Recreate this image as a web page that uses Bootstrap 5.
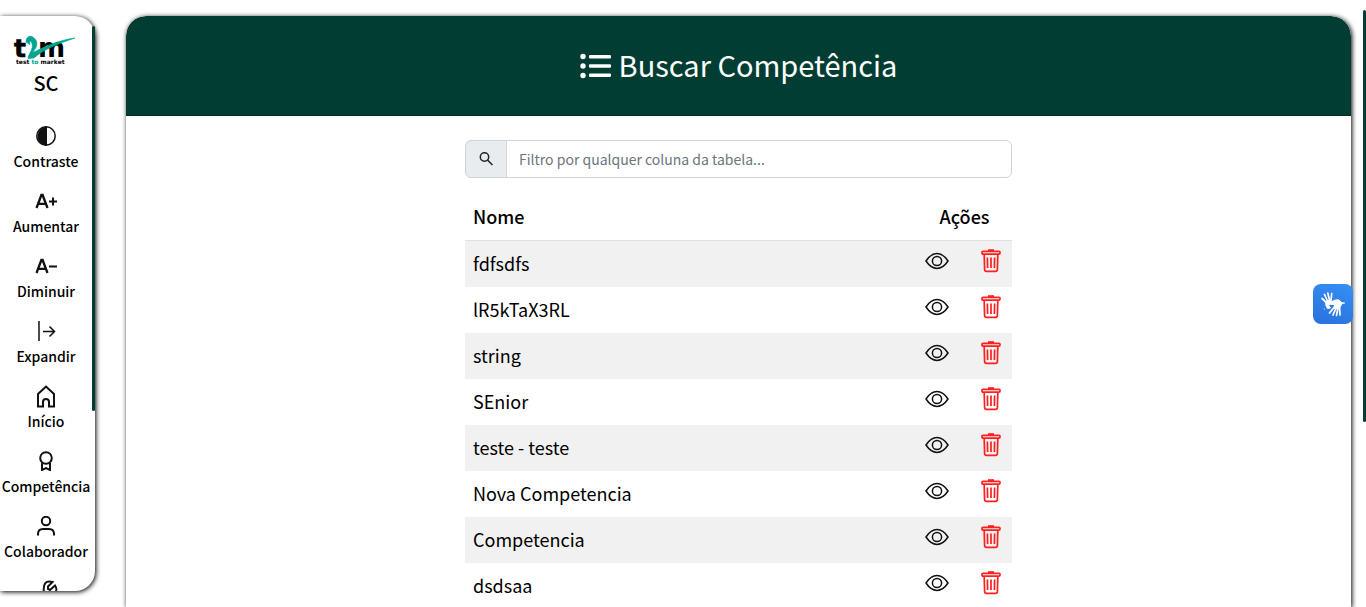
<!DOCTYPE html>
<html lang="pt-BR">
<head>
<meta charset="utf-8">
<meta name="viewport" content="width=device-width, initial-scale=1">
<title>Buscar Competência</title>
<link rel="stylesheet" href="https://cdn.jsdelivr.net/npm/bootstrap@5.3.0/dist/css/bootstrap.min.css">
<style>
  :root { --brand: #023d33; }
  body { font-family: "Noto Sans CJK JP", "Noto Sans", sans-serif; background: #fff; color: #000; }
  .page { height: 100vh; padding-top: 16px; gap: 31px; }
  .sidebar { width: 95px; height: calc(100vh - 32px); border-radius: 0 20px 20px 0; box-shadow: 1px 1px 5px #000; }
  .side-scroll { height: 100%; padding: 20px 3px 0 0; border-radius: 0 20px 20px 0; }
  .thumb { background: var(--brand); border-radius: 2px; width: 3px; }
  .side-thumb { top: 10px; right: 0; height: 67%; }
  .page-thumb { top: 10px; right: 0; height: 412px; }
  .user-tag { font-size: 20px; line-height: 30px; font-weight: 500; margin-bottom: 28px; }
  .side-item { height: 65px; font-size: 14px; line-height: 24px; font-weight: 500; color: #000; background: none; border: 0; padding: 0; gap: 3px; white-space: nowrap; }
  .side-item svg { flex: none; }
  .panel { height: 100%; margin-right: 15px; border-radius: 20px 20px 0 0; box-shadow: 1px 1px 5px #000; }
  .panel-head { height: 100px; background: var(--brand); border-radius: 20px 20px 0 0; border-bottom: 1px solid #0b2b26; gap: 7px; }
  .panel-head h1 { font-size: 29px; line-height: 40px; padding-bottom: 4px; font-weight: 400; }
  .search-area { max-width: 547px; padding-top: 24px; }
  .search-area .form-control, .search-area .input-group-text { height: 38px; border-color: #ced4da; }
  .search-area .input-group-text { background: #e9ecef; }
  .search-area .form-control { font-size: 14px; }
  .search-area .form-control::placeholder { color: #6c757d; }
  .list-table { --bs-table-striped-bg: #f1f1f1; --bs-table-bg: #fff; --bs-table-color: #000; --bs-table-striped-color: #000; font-size: 18px; line-height: 28px; }
  .list-table > :not(caption) > * > * { border-bottom-width: 0; height: 46px; vertical-align: top; }
  .list-table > thead > tr > th { font-weight: 500; border-bottom: 1px solid #dee2e6; }
  .actions-col { width: 95px; }
  .actions { height: 30px; padding-right: 3px; }
  .act { border: 0; background: none; padding: 0; display: block; }
  .act svg { display: block; }
  .libras { top: 284px; right: 13px; width: 40px; height: 40px; border: 0; border-radius: 8px; background: linear-gradient(200deg, #3490f5, #2a70dd); }
</style>
</head>
<body class="overflow-hidden">
<svg class="d-none" aria-hidden="true">
  <symbol id="eye" viewBox="0 0 24 24"><g fill="none" stroke="#111" stroke-width="1.5"><path d="M1 12C4.500 6.700 8 4.600 12 4.600S19.500 6.700 23 12c-3.500 5.300-7 7.400-11 7.400S4.500 17.300 1 12z"/><circle cx="12" cy="12" r="4.600"/></g></symbol>
  <symbol id="trash" viewBox="0 0 20 24"><g fill="none" stroke="#ff1f1f" stroke-width="1.700"><path d="M7 1.200h6" stroke-width="2"/><rect x="1" y="2.300" width="18" height="2.800" rx="1"/><path d="M3.200 5.500 3.600 20.500q.1 1.800 1.900 1.800h9q1.800 0 1.900-1.800L16.800 5.500M6.400 8.500l.2 10.500M10 8.500V19M13.600 8.500 13.400 19"/></g></symbol>
</svg>

<div class="page d-flex">
  <aside class="sidebar position-relative flex-shrink-0 bg-white">
    <div class="side-scroll overflow-hidden">
      <a href="#" class="d-block text-center" aria-label="t2m test to market">
        <svg class="d-block mx-auto" width="64" height="32" viewBox="0 0 64 32" overflow="visible">
          <g font-family="DejaVu Sans, sans-serif" font-weight="700">
            <text x="0" y="21" font-size="25" stroke="#000" stroke-width=".6">t</text>
            <text x="24" y="21" font-size="26">m</text>
            <text x="2" y="28" font-size="6">test <tspan fill="#00a48f">to</tspan> market</text>
          </g>
          <path d="M12 6C12 0 17-1 20 2c5 4 3 10-2 15C28 12 44 4 61 2 46 7 30 13 20 22l-6 .5c0-4 6-10 4-15-1-3-3-3-2 1z" fill="#00a48f" stroke="#00a48f" stroke-width=".6"/>
        </svg>
      </a>
      <div class="user-tag text-center">SC</div>
      <nav class="d-flex flex-column" aria-label="Menu">
        <button type="button" class="side-item d-flex flex-column align-items-center">
          <svg width="20" height="20" viewBox="0 0 20 20"><circle cx="10" cy="10" r="9.200" fill="none" stroke="#111" stroke-width="1.500"/><path d="M11 .5a9.500 9.500 0 1 0 0 19z" fill="#111"/></svg>Contraste
        </button>
        <button type="button" class="side-item d-flex flex-column align-items-center">
          <svg width="22" height="20" viewBox="0 0 22 20"><path d="M1.500 17 6.400 4h1.200L12.500 17M3.300 12.800h7.400" fill="none" stroke="#111" stroke-width="2.300"/><path d="M14 10.500h8M18 6.500v8" stroke="#111" stroke-width="2"/></svg>Aumentar
        </button>
        <button type="button" class="side-item d-flex flex-column align-items-center">
          <svg width="22" height="20" viewBox="0 0 22 20"><path d="M1.500 17 6.400 4h1.200L12.500 17M3.300 12.800h7.400" fill="none" stroke="#111" stroke-width="2.300"/><path d="M14 10.500h8" stroke="#111" stroke-width="2"/></svg>Diminuir
        </button>
        <button type="button" class="side-item d-flex flex-column align-items-center">
          <svg width="20" height="20" viewBox="0 0 20 20"><path d="M3 0v20M7 10.500h11M13.500 5.500l5 5-5 5" fill="none" stroke="#111" stroke-width="1.500"/></svg>Expandir
        </button>
        <a href="#" class="side-item d-flex flex-column align-items-center text-decoration-none">
          <svg width="20" height="20" viewBox="0 0 20 20" overflow="visible"><path d="M2 20.500V8L10 .5 18 8v12.500h-5V16a3 3 0 0 0-6 0v4.500z" fill="none" stroke="#111" stroke-width="2"/></svg>Início
        </a>
        <a href="#" class="side-item d-flex flex-column align-items-center text-decoration-none">
          <svg width="20" height="20" viewBox="0 0 20 20"><path d="M6 12v7l4-2 4 2v-7" fill="none" stroke="#111" stroke-width="2"/><circle cx="10" cy="7" r="5.800" fill="none" stroke="#111" stroke-width="2"/></svg>Competência
        </a>
        <a href="#" class="side-item d-flex flex-column align-items-center text-decoration-none">
          <svg width="20" height="20" viewBox="0 0 20 20"><g fill="none" stroke="#111" stroke-width="2"><circle cx="10" cy="5" r="4.200"/><path d="M2 19.500V18q0-5 5-5h6q5 0 5 5v1.500"/></g></svg>Colaborador
        </a>
        <a href="#" class="side-item d-flex flex-column align-items-center" aria-label="Ferramentas">
          <svg width="20" height="20" viewBox="0 0 20 20" overflow="visible"><path d="M16.500 1 12 5.500V8l2 1 5-4.500q4 6-3 8-2-.2-3 1l-6 6q-3 1-4-2l5-5Q6-2 16.500 1z" fill="none" stroke="#111" stroke-width="2"/></svg>
        </a>
      </nav>
    </div>
    <div class="thumb side-thumb position-absolute"></div>
  </aside>

  <main class="panel flex-grow-1 overflow-hidden bg-white">
    <header class="panel-head d-flex align-items-center justify-content-center text-white">
      <svg width="32" height="26" viewBox="0 0 32 26" fill="#fff" aria-hidden="true"><circle cx="3" cy="3.500" r="2.700"/><circle cx="3" cy="13" r="2.700"/><circle cx="3" cy="22.500" r="2.700"/><rect x="9" y="2" width="22" height="3.500" rx="1"/><rect x="9" y="11.300" width="22" height="3.500" rx="1"/><rect x="9" y="20.600" width="22" height="3.500" rx="1"/></svg>
      <h1 class="m-0">Buscar Competência</h1>
    </header>
    <div class="search-area mx-auto">
      <div class="input-group mb-3">
        <label class="input-group-text" for="filtro" aria-label="Filtro"><svg width="16" height="16" viewBox="0 0 16 16" fill="none" stroke="#222" stroke-width="1.500"><circle cx="6.500" cy="6" r="4.200"/><path d="M9.500 9 14.500 14"/></svg></label>
        <input id="filtro" type="text" class="form-control" placeholder="Filtro por qualquer coluna da tabela...">
      </div>
      <table class="table table-striped list-table">
        <thead><tr><th scope="col">Nome</th><th scope="col" class="actions-col text-center">Ações</th></tr></thead>
        <tbody id="rows"></tbody>
      </table>
    </div>
  </main>
</div>
<div class="thumb page-thumb position-fixed"></div>
<button type="button" class="libras position-fixed p-0" aria-label="Libras">
  <svg width="40" height="40" viewBox="0 0 40 40" stroke="#fff" stroke-linecap="round" stroke-linejoin="round" fill="#fff"><path d="M14 19 9 14.500M14.500 17 11.500 10.500M16.500 16 14.800 9M18 17 18.700 9.500" stroke-width="1.700" fill="none"/><path d="M12.500 18q4-3 7 0l-4 3 2 3-3 .5q-2-2-2-6.500z" stroke-width="1"/><path d="M16 20q5-5 10-4l3 3q-1 4-4 6l-4-1 .5-3z" stroke-width="1"/><path d="M21.500 23 16.500 29M23 24 20 31M25 24 23.500 31.500M26.500 22.500 27 31M27 19h4" stroke-width="1.700" fill="none"/><circle cx="11.500" cy="25" r=".6" stroke="none"/></svg>
</button>

<script src="https://cdn.jsdelivr.net/npm/bootstrap@5.3.0/dist/js/bootstrap.bundle.min.js"></script>
<script>
  const names = ["fdfsdfs", "lR5kTaX3RL", "string", "SEnior", "teste - teste", "Nova Competencia", "Competencia", "dsdsaa"];
  document.getElementById("rows").innerHTML = names.map(n => `
    <tr><td>${n}</td><td><div class="actions d-flex justify-content-between align-items-start">
      <button type="button" class="act" aria-label="Ver ${n}"><svg width="24" height="24"><use href="#eye"/></svg></button>
      <button type="button" class="act" aria-label="Excluir ${n}"><svg width="20" height="24"><use href="#trash"/></svg></button>
    </div></td></tr>`).join("");
</script>
</body>
</html>
